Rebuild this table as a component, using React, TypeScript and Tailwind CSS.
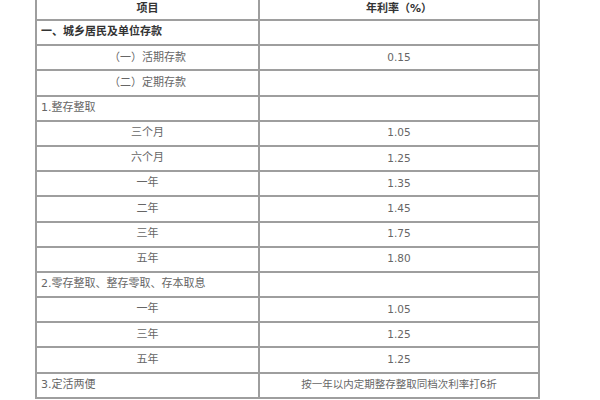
import React from 'react';

type Row = { label: string; rate?: string; align?: 'left' | 'center'; bold?: boolean };

const rows: Row[] = [
  { label: '一、城乡居民及单位存款', align: 'left', bold: true },
  { label: '（一）活期存款', rate: '0.15' },
  { label: '（二）定期存款' },
  { label: '1.整存整取', align: 'left' },
  { label: '三个月', rate: '1.05' },
  { label: '六个月', rate: '1.25' },
  { label: '一年', rate: '1.35' },
  { label: '二年', rate: '1.45' },
  { label: '三年', rate: '1.75' },
  { label: '五年', rate: '1.80' },
  { label: '2.零存整取、整存零取、存本取息', align: 'left' },
  { label: '一年', rate: '1.05' },
  { label: '三年', rate: '1.25' },
  { label: '五年', rate: '1.25' },
  { label: '3.定活两便', align: 'left', rate: '按一年以内定期整存整取同档次利率打6折' },
];

export default function App() {
  return (
    <div className="w-[600px] h-[400px] bg-white overflow-hidden font-['DejaVu_Sans','Noto_Sans_CJK_SC',sans-serif]">
      <div className="ml-[35px] w-[505px] border-x-2 border-[#9e9e9e]">
        {/* header */}
        <div className="flex h-[21px] border-b-2 border-[#9e9e9e] text-[11px] font-bold text-[#333]">
          <div className="w-[223px] border-r-2 border-[#9e9e9e] flex items-center justify-center">项目</div>
          <div className="flex-1 flex items-center justify-center">年利率（%）</div>
        </div>

        {rows.map((row, i) => (
          <div key={i} className="flex h-[25.2px] border-b-2 border-[#9e9e9e] text-[11px] text-[#666]">
            <div
              className={`w-[223px] border-r-2 border-[#9e9e9e] flex items-center ${
                row.align === 'left' ? 'justify-start pl-[4px]' : 'justify-center'
              } ${row.bold ? 'font-bold text-[#333]' : ''}`}
            >
              {row.label}
            </div>
            <div className="flex-1 flex items-center justify-center text-[10.5px]">{row.rate}</div>
          </div>
        ))}
      </div>
    </div>
  );
}
